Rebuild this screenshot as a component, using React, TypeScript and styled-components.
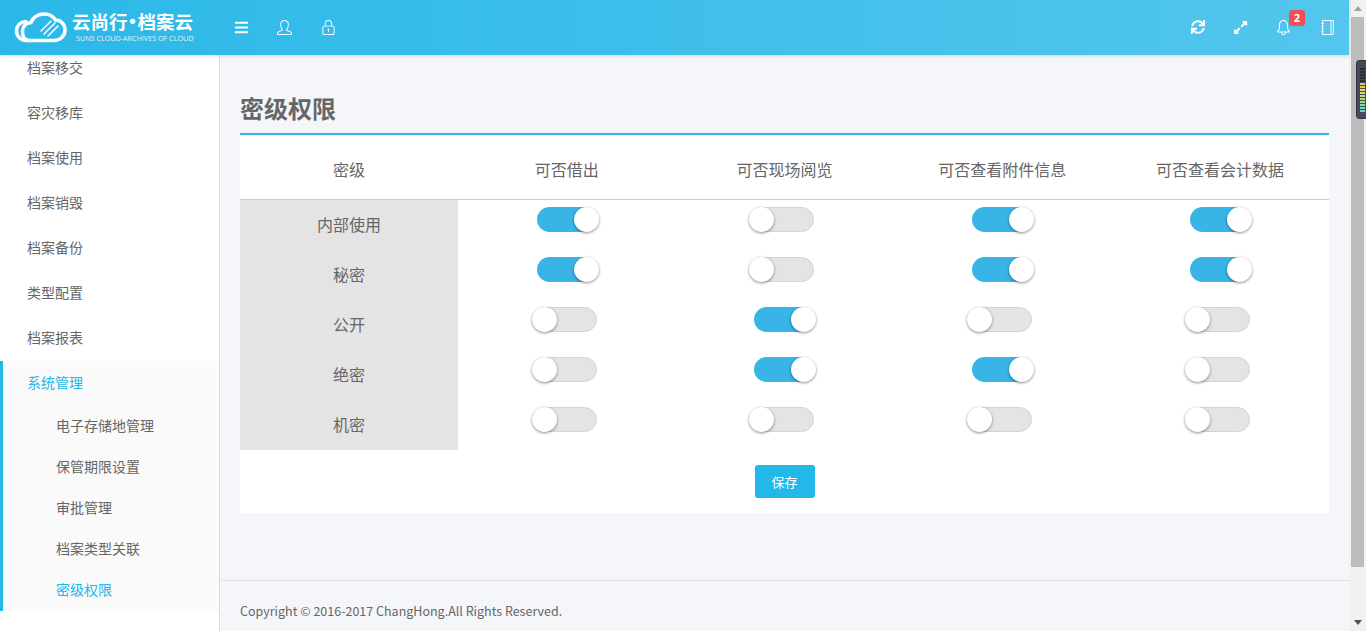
import React from 'react';
import styled, { createGlobalStyle } from 'styled-components';
import { FaBars, FaSync, FaExpandAlt } from 'react-icons/fa';
import { SlUser, SlLock, SlBell, SlNotebook } from 'react-icons/sl';

const GlobalStyle = createGlobalStyle`
  * { box-sizing: border-box; }
  html, body { margin: 0; height: 100%; overflow: hidden; }
  body {
    font-family: "Noto Sans CJK SC", "Open Sans", sans-serif;
    color: #666;
  }
`;

const Shell = styled.div`
  display: flex;
  width: 1366px;
  height: 631px;
  overflow: hidden;
  position: relative;
`;

const Page = styled.div`
  flex: 1;
  min-width: 0;
  display: flex;
  flex-direction: column;
  background: #f5f6fa;
`;

const Header = styled.header`
  height: 55px;
  flex: none;
  display: flex;
  align-items: center;
  background: linear-gradient(to right, #2bb8e8, #53c6ed);
  box-shadow: 0 1px 4px rgba(0, 0, 0, 0.15);
  position: relative;
  z-index: 2;
`;

const Logo = styled.div`
  width: 219px;
  flex: none;
  display: flex;
  align-items: center;
  padding-left: 14px;
`;

const LogoText = styled.div`
  margin-left: 4px;
  color: #fff;
  display: flex;
  flex-direction: column;
  align-items: flex-start;
`;

const LogoTitle = styled.div`
  font-size: 18.5px;
  font-weight: 700;
  line-height: 24px;
  margin-top: -3px;
  white-space: nowrap;
  display: flex;
`;

const LogoDot = styled.span`
  font-family: "Liberation Sans", sans-serif;
  width: 10px;
  text-align: center;
`;

const LogoSub = styled.div`
  font-family: "Open Sans", sans-serif;
  font-size: 7.2px;
  line-height: 10px;
  margin-left: 4px;
  opacity: 0.85;
  white-space: nowrap;
`;

const IconGroup = styled.div`
  display: flex;
  align-items: center;
`;

const RightGroup = styled(IconGroup)`
  margin-left: auto;
`;

const HeaderIcon = styled.div<{ $width: number }>`
  width: ${({ $width }) => $width}px;
  height: 55px;
  display: flex;
  align-items: center;
  justify-content: center;
  color: #fff;
  font-size: 15px;
  position: relative;
  padding-bottom: 1px;
`;

const Badge = styled.span`
  position: absolute;
  top: 10px;
  left: 28px;
  width: 16px;
  height: 16px;
  border-radius: 3px;
  background: #f04f54;
  color: #fff;
  font-family: "Open Sans", sans-serif;
  font-size: 11px;
  font-weight: 700;
  line-height: 16px;
  text-align: center;
`;

const Body = styled.div`
  flex: 1;
  min-height: 0;
  display: flex;
`;

const Sidebar = styled.nav`
  width: 220px;
  flex: none;
  background: #fff;
  border-right: 1px solid #d9dce1;
  overflow: hidden;
`;

const MenuList = styled.div`
  margin-top: -9px;
`;

const MenuItem = styled.div<{ $active?: boolean }>`
  height: 45px;
  line-height: 43px;
  padding-left: 27px;
  font-size: 14px;
  color: ${({ $active }) => ($active ? '#22b8e8' : '#666')};
`;

const ActiveSection = styled.div`
  background: #fafafb;
  border-left: 3px solid #22b8e8;

  ${MenuItem} {
    padding-left: 24px;
  }
`;

const SubItem = styled.div<{ $active?: boolean }>`
  height: 41px;
  line-height: 39px;
  padding-left: 53px;
  font-size: 14px;
  color: ${({ $active }) => ($active ? '#22b8e8' : '#666')};
`;

const Main = styled.main`
  flex: 1;
  min-width: 0;
  display: flex;
  flex-direction: column;
`;

const Content = styled.div`
  flex: 1;
  padding: 0 20px;
`;

const Title = styled.h1`
  margin: 0;
  height: 80px;
  padding-top: 36px;
  border-bottom: 2px solid #38b4e6;
  font-size: 24px;
  font-weight: 700;
  line-height: 34px;
  color: #666;
`;

const Panel = styled.div`
  background: #fff;
  height: 378px;
`;

const Grid = styled.div`
  display: grid;
  grid-template-columns: repeat(5, 1fr);
`;

const HeadCell = styled.div`
  height: 65px;
  border-bottom: 1px solid #ccc;
  display: flex;
  align-items: center;
  justify-content: center;
  font-size: 16px;
  color: #666;
  padding-top: 4px;
`;

const LevelCell = styled.div`
  height: 50px;
  background: #e4e4e4;
  display: flex;
  align-items: center;
  justify-content: center;
  font-size: 16px;
  color: #666;
  padding-bottom: 3px;
`;

const ToggleCell = styled.div`
  height: 50px;
  display: flex;
  justify-content: center;
  padding: 7px 5px 0 0;
`;

const Toggle = styled.div`
  width: 65px;
  height: 25px;
  position: relative;
  flex: none;
`;

const Track = styled.div<{ $on: boolean }>`
  height: 25px;
  border-radius: 13px;
  margin-left: ${({ $on }) => ($on ? '5px' : '0')};
  background: ${({ $on }) => ($on ? '#38b4e6' : '#e4e4e4')};
  border: ${({ $on }) => ($on ? 'none' : '1px solid #d4d4d4')};
`;

const Knob = styled.div<{ $on: boolean }>`
  position: absolute;
  top: 0;
  left: ${({ $on }) => ($on ? '42px' : '0')};
  width: 25px;
  height: 25px;
  border-radius: 50%;
  background: #fff;
  box-shadow: 0 1px 3px rgba(0, 0, 0, 0.45);
`;

const Actions = styled.div`
  display: flex;
  justify-content: center;
  padding: 15px 0 0 0;
`;

const SaveButton = styled.button`
  width: 60px;
  height: 33px;
  border: none;
  border-radius: 3px;
  background: #22b8e8;
  color: #fff;
  font-family: inherit;
  font-size: 13px;
  padding: 0;
`;

const Footer = styled.footer`
  height: 51px;
  flex: none;
  border-top: 1px solid #e1e3e8;
  padding: 21px 20px 0;
  font-size: 12.5px;
  line-height: 18px;
  color: #666;
`;

const Scrollbar = styled.div`
  width: 17px;
  flex: none;
  background: #f1f1f1;
  display: flex;
  flex-direction: column;
  align-items: center;
`;

const ArrowUp = styled.div`
  margin-top: 6px;
  width: 0;
  height: 0;
  border-left: 4px solid transparent;
  border-right: 4px solid transparent;
  border-bottom: 5px solid #a3a3a3;
`;

const Thumb = styled.div`
  margin-top: 6px;
  width: 13px;
  height: 550px;
  background: #bdbdbd;
`;

const ArrowDown = styled.div`
  margin-top: auto;
  margin-bottom: 6px;
  width: 0;
  height: 0;
  border-left: 4px solid transparent;
  border-right: 4px solid transparent;
  border-top: 5px solid #505050;
`;

const Widget = styled.div`
  position: absolute;
  top: 60px;
  right: 0;
  width: 10px;
  height: 59px;
  border-radius: 4px 0 0 4px;
  background: #444a59;
  border: 1px solid #33363f;
  border-right: none;
  display: flex;
  flex-direction: column;
  justify-content: center;
  gap: 1px;
  padding-left: 3px;
`;

const WidgetBar = styled.span<{ $color: string }>`
  display: block;
  width: 5px;
  height: 2px;
  background: ${({ $color }) => $color};
`;

const widgetColors = [
  '#2a2d36', '#2a2d36', '#2a2d36', '#2a2d36', '#2a2d36',
  '#e4c95a', '#e4c95a', '#e4d46a', '#d9d86e', '#c6d97a', '#b0d888',
  '#9cd898', '#8ad8a8', '#7ad8b8', '#6cd4c4',
];

const CloudLogo = () => (
  <svg width="54" height="32" viewBox="0 0 54 32" fill="none" stroke="#fff" strokeWidth="3.500" strokeLinecap="round">
    <path d="M12 9.500C6 10 2.500 14 2.500 19c0 5 4 9.500 9.500 9.500h4" />
    <path d="M15 28.500h25c6 0 11-4.500 11-10.500S46.500 8 41.500 8C39 4 35 2 30.500 2 24 2 19 5.500 17 10.500c-5 .5-8.500 4-8.500 9S11 28.500 15 28.500z" />
    <path d="M37 9 27 19M41 11 30 22M44 14 34 24" strokeWidth="1.500" />
  </svg>
);

const columns = ['密级', '可否借出', '可否现场阅览', '可否查看附件信息', '可否查看会计数据'];

const rows: { name: string; flags: boolean[] }[] = [
  { name: '内部使用', flags: [true, false, true, true] },
  { name: '秘密', flags: [true, false, true, true] },
  { name: '公开', flags: [false, true, false, false] },
  { name: '绝密', flags: [false, true, true, false] },
  { name: '机密', flags: [false, false, false, false] },
];

const topMenu = ['档案移交', '容灾移库', '档案使用', '档案销毁', '档案备份', '类型配置', '档案报表'];
const subMenu = ['电子存储地管理', '保管期限设置', '审批管理', '档案类型关联'];

export default function App() {
  return (
    <Shell>
      <GlobalStyle />
      <Page>
        <Header>
          <Logo>
            <CloudLogo />
            <LogoText>
              <LogoTitle>云尚行<LogoDot>•</LogoDot>档案云</LogoTitle>
              <LogoSub>SUNS CLOUD-ARCHIVES OF CLOUD</LogoSub>
            </LogoText>
          </Logo>
          <IconGroup>
            <HeaderIcon $width={44}><FaBars /></HeaderIcon>
            <HeaderIcon $width={42}><SlUser /></HeaderIcon>
            <HeaderIcon $width={46}><SlLock /></HeaderIcon>
          </IconGroup>
          <RightGroup>
            <HeaderIcon $width={42}><FaSync size={14} /></HeaderIcon>
            <HeaderIcon $width={42}><FaExpandAlt size={15} /></HeaderIcon>
            <HeaderIcon $width={44}>
              <SlBell />
              <Badge>2</Badge>
            </HeaderIcon>
            <HeaderIcon $width={44}><SlNotebook /></HeaderIcon>
          </RightGroup>
        </Header>
        <Body>
          <Sidebar>
            <MenuList>
              {topMenu.map((item) => (
                <MenuItem key={item}>{item}</MenuItem>
              ))}
              <ActiveSection>
                <MenuItem $active>系统管理</MenuItem>
                {subMenu.map((item) => (
                  <SubItem key={item}>{item}</SubItem>
                ))}
                <SubItem $active>密级权限</SubItem>
              </ActiveSection>
            </MenuList>
          </Sidebar>
          <Main>
            <Content>
              <Title>密级权限</Title>
              <Panel>
                <Grid>
                  {columns.map((col) => (
                    <HeadCell key={col}>{col}</HeadCell>
                  ))}
                  {rows.map((row) => (
                    <React.Fragment key={row.name}>
                      <LevelCell>{row.name}</LevelCell>
                      {row.flags.map((on, i) => (
                        <ToggleCell key={i}>
                          <Toggle>
                            <Track $on={on} />
                            <Knob $on={on} />
                          </Toggle>
                        </ToggleCell>
                      ))}
                    </React.Fragment>
                  ))}
                </Grid>
                <Actions>
                  <SaveButton>保存</SaveButton>
                </Actions>
              </Panel>
            </Content>
            <Footer>Copyright © 2016-2017 ChangHong.All Rights Reserved.</Footer>
          </Main>
        </Body>
      </Page>
      <Scrollbar>
        <ArrowUp />
        <Thumb />
        <ArrowDown />
      </Scrollbar>
      <Widget>
        {widgetColors.map((c, i) => (
          <WidgetBar key={i} $color={c} />
        ))}
      </Widget>
    </Shell>
  );
}
